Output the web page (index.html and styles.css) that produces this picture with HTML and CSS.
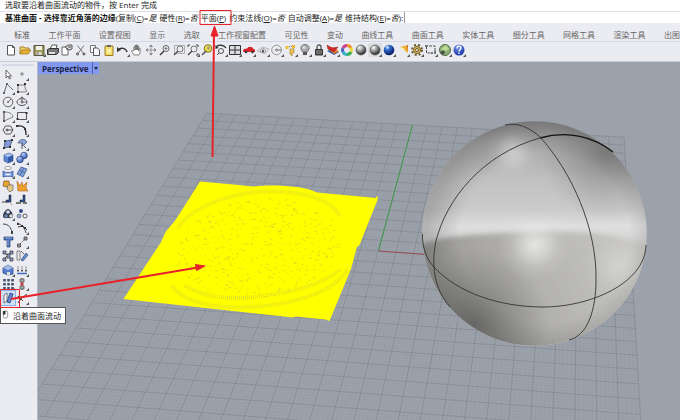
FILE: index.html
```html
<!DOCTYPE html>
<html lang="zh-CN">
<head>
	<meta charset="utf-8">
	<meta name="viewport" content="width=device-width, initial-scale=1">
	<title>Perspective</title>
	<link rel="stylesheet" href="styles.css">
</head>
<body>
	<header>
		<div class="history">选取要沿着曲面流动的物件，按 Enter 完成</div>
		<div class="command">
			<label class="prompt" for="cmd">基准曲面 - 选择靠近角落的边缘</label>
			<span class="paren">(</span>
			<button class="option">复制(<u>C</u>)=<i>是</i></button>
			<button class="option">硬性(<u>R</u>)=<i>否</i></button>
			<button class="option plane">平面(<u>P</u>)</button>
			<button class="option">约束法线(<u>O</u>)=<i>否</i></button>
			<button class="option">自动调整(<u>A</u>)=<i>是</i></button>
			<button class="option">维持结构(<u>E</u>)=<i>否</i>):</button>
			<input id="cmd" class="entry" type="text">
		</div>
	</header>

	<nav class="tabs">
		<button class="tab active">标准</button>
		<button class="tab">工作平面</button>
		<button class="tab">设置视图</button>
		<button class="tab">显示</button>
		<button class="tab">选取</button>
		<button class="tab">工作视窗配置</button>
		<button class="tab">可见性</button>
		<button class="tab">变动</button>
		<button class="tab">曲线工具</button>
		<button class="tab">曲面工具</button>
		<button class="tab">实体工具</button>
		<button class="tab">细分工具</button>
		<button class="tab">网格工具</button>
		<button class="tab">渲染工具</button>
		<button class="tab">出图</button>
	</nav>

	<div class="toolbar">
		<button class="tool" aria-label="新建"><svg viewBox="0 0 14 14"><path d="M3.500 2.500h5l2 2v7.500h-7z" fill="#fff" stroke="#555"/><path d="M8.500 2.500v2h2" fill="none" stroke="#555"/></svg></button>
		<button class="tool" aria-label="打开"><svg viewBox="0 0 14 14"><path d="M2 11V4h4l1 1h4v2" fill="#f2cf62" stroke="#a8822b"/><path d="M2 11l2-4h9l-3 4z" fill="#e9ae2f" stroke="#95701f" stroke-width=".7"/></svg></button>
		<button class="tool more" aria-label="保存"><svg viewBox="0 0 14 14"><path d="M2 2.500h10v10H2z" fill="#a09a55" stroke="#555344"/><path d="M4 3h6v4H4z" fill="#f1f1eb"/><path d="M4.500 9h5v3h-5z" fill="#ddd"/><path d="M5.500 9.500h1v2h-1z" fill="#444"/></svg></button>
		<button class="tool" aria-label="打印"><svg viewBox="0 0 14 14"><path d="M4 6l2-4h5l-1 4" fill="#fff" stroke="#555"/><path d="M1.500 6.500l2-1h9v4l-2 2h-9z" fill="#777" stroke="#333"/><path d="M3 9h6v2H3z" fill="#ddd"/></svg></button>
		<button class="tool" aria-label="文件属性"><svg viewBox="0 0 14 14"><path d="M2 4h6v8H2z" fill="#fff" stroke="#666"/><path d="M5 4l3-2h4v4L9 7z" fill="#ddd" stroke="#555"/><path d="M8 4h3M6 6h2" stroke="#444"/></svg></button>
		<button class="tool" aria-label="剪切"><svg viewBox="0 0 14 14" fill="none"><path d="M3.500 2.500l6 8M10 2.500l-6 8" stroke="#777"/><circle cx="3.500" cy="11" r="1" stroke="#444"/><circle cx="10" cy="11" r="1" stroke="#444"/></svg></button>
		<button class="tool" aria-label="复制"><svg viewBox="0 0 14 14"><path d="M2.500 2.500h5v7h-5z" fill="#fff" stroke="#777"/><path d="M5.500 5h4l2 2v5.500h-6z" fill="#f6f6fa" stroke="#555"/></svg></button>
		<button class="tool" aria-label="粘贴"><svg viewBox="0 0 14 14"><path d="M3 3h8v9.500H3z" fill="#f4dd65" stroke="#9a7d2b"/><path d="M5 2h4v2H5z" fill="#666"/><path d="M5 6h4v4H5z" fill="#fbf0a5"/></svg></button>
		<button class="tool more" aria-label="撤销"><svg viewBox="0 0 14 14"><path d="M2 7c3-3 8-2 9 2" fill="none" stroke="#333" stroke-width="1.300"/><path d="M1 4v5l4-2z" fill="#333"/></svg></button>
		<button class="tool" aria-label="平移"><svg viewBox="0 0 14 14"><path d="M4 12L1.500 8l1-1L4 8V4l1-.5V7V2.500h1.200V7V2h1.200v5V3h1.200v5l.5-3 1 .3L10 10l-1 2z" fill="#fff" stroke="#666" stroke-width=".8"/></svg></button>
		<button class="tool" aria-label="旋转视图"><svg viewBox="0 0 14 14" fill="none" stroke="#999"><path d="M7 2v10M2 7h10"/><path d="M5.500 4L7 2l1.500 2M5.500 10L7 12l1.500-2M10 5.500L12 7l-2 1.500M4 5.500L2 7l2 1.500" stroke="#777"/></svg></button>
		<button class="tool" aria-label="缩放"><svg viewBox="0 0 14 14"><circle cx="8" cy="5.500" r="3" fill="#eee" stroke="#666"/><path d="M6 8l-4 4" stroke="#444" stroke-width="1.600"/><path d="M6.500 5.500h3M8 4v3" stroke="#555" stroke-width=".7"/></svg></button>
		<button class="tool" aria-label="框选缩放"><svg viewBox="0 0 14 14" fill="none"><path d="M2.500 2.500h10v8h-10z" stroke="#777" stroke-dasharray="1 1"/><circle cx="8" cy="6" r="3" stroke="#777"/><path d="M6 8l-4 4" stroke="#444" stroke-width="1.300"/></svg></button>
		<button class="tool more" aria-label="缩放至最大范围"><svg viewBox="0 0 14 14" fill="none"><path d="M2 4V2h2M10 2h2v2M12 10v2h-2" stroke="#444"/><circle cx="8" cy="6" r="3" stroke="#777"/><path d="M6 8l-4 4" stroke="#444" stroke-width="1.300"/></svg></button>
		<button class="tool" aria-label="缩放至选取物件"><svg viewBox="0 0 14 14"><circle cx="8" cy="5.500" r="3.800" fill="#f1df3c" stroke="#7b7238"/><circle cx="8.500" cy="5" r="1.500" fill="#999"/><path d="M6 8l-4 4" stroke="#555" stroke-width="1.600"/></svg></button>
		<button class="tool more" aria-label="还原视图"><svg viewBox="0 0 14 14" fill="none"><path d="M2 4c3-3 8-2 10 1" stroke="#333" stroke-width="1.300"/><path d="M1.500 2v4l3-1z" fill="#333"/><circle cx="7" cy="8" r="2.500" stroke="#555"/><path d="M5 10l-2 2" stroke="#444"/></svg></button>
		<button class="tool more" aria-label="四个工作视窗"><svg viewBox="0 0 14 14"><path d="M1.500 2.500h11v9h-11z" fill="#dcdde1" stroke="#333"/><path d="M7 2v10M1 7h12" stroke="#333"/></svg></button>
		<button class="tool more" aria-label="汽车"><svg viewBox="0 0 14 14"><path d="M1 8l1-2 3-.5L6.500 4H10l1.500 2 1.500.5V9H1z" fill="#d8232a"/><circle cx="4" cy="9" r="1.300" fill="#333"/><circle cx="10.500" cy="9" r="1.300" fill="#333"/></svg></button>
		<button class="tool more" aria-label="工作平面"><svg viewBox="0 0 14 14"><path d="M1 8l5-4 7 2-4 5z" fill="#e5e6e9" stroke="#bbb"/><path d="M4 8c2-3 4-3 6 0-2 2-4 2-6 0z" fill="#fff" stroke="#888"/><circle cx="7" cy="8" r="1.200" fill="#555"/></svg></button>
		<button class="tool more" aria-label="物件锁点"><svg viewBox="0 0 14 14" fill="none"><circle cx="6.500" cy="7" r="4.800" stroke="#999"/><path d="M6.500 7H12" stroke="#777"/><circle cx="6.500" cy="7" r="1" fill="#eee" stroke="#777"/></svg></button>
		<button class="tool more" aria-label="选取"><svg viewBox="0 0 14 14"><path d="M3 4l8-1-3 5" fill="none" stroke="#666" stroke-dasharray="1 1"/><path d="M1.500 3h3v3h-3zM8 2h3v3H8z" fill="#f1bd35"/><path d="M6 6h4v4H8v3L6 11z" fill="#edc752" stroke="#9a7934" stroke-width=".6"/></svg></button>
		<button class="tool more" aria-label="隐藏"><svg viewBox="0 0 14 14"><path d="M4.800 9C1 5 3.500 1.500 7 1.500S13 5 9.200 9z" fill="#a9abae" stroke="#777"/><path d="M5 9h4v3H5z" fill="#555"/><circle cx="6" cy="4.500" r="1.500" fill="#ddd"/></svg></button>
		<button class="tool more" aria-label="锁定"><svg viewBox="0 0 14 14"><path d="M5 7V4a2 2 0 014 0v3" fill="none" stroke="#555" stroke-width="1.300"/><path d="M3.500 6.500h7v5.500h-7z" fill="#555" stroke="#333"/><path d="M4 8h6M4 10h6" stroke="#888"/></svg></button>
		<button class="tool more" aria-label="图层"><svg viewBox="0 0 14 14"><path d="M1 8l5-2 7 3-5 3z" fill="#315ca2"/><path d="M1 5l5-1 7 4-5 3z" fill="#f07d26"/><path d="M1 2l5 3 6-1-4 5-6-3z" fill="#d42829" stroke="#762323" stroke-width=".5"/></svg></button>
		<button class="tool" aria-label="颜色"><svg viewBox="0 0 14 14" fill="none" stroke-width="3"><path d="M7 2.500A4.500 4.500 0 0111 5" stroke="#ee962a"/><path d="M11 5a4.500 4.500 0 010 4" stroke="#e9db36"/><path d="M11 9a4.500 4.500 0 01-4 2.500" stroke="#3daf52"/><path d="M7 11.500A4.500 4.500 0 013 9" stroke="#35b4c1"/><path d="M3 9a4.500 4.500 0 010-4" stroke="#4267c2"/><path d="M3 5a4.500 4.500 0 014-2.500" stroke="#cc4193"/></svg></button>
		<button class="tool" aria-label="着色"><svg viewBox="0 0 14 14"><circle cx="7" cy="7" r="5" fill="url(#ballGrey)" stroke="#444" stroke-width=".6"/></svg></button>
		<button class="tool more pressed" aria-label="渲染"><svg viewBox="0 0 14 14"><circle cx="7" cy="7" r="5" fill="url(#ballGrey)" stroke="#444" stroke-width=".6"/></svg></button>
		<button class="tool more" aria-label="渲染属性"><svg viewBox="0 0 14 14"><circle cx="7" cy="7" r="5.300" fill="url(#ballBlue)"/></svg></button>
		<button class="tool more" aria-label="灯光"><svg viewBox="0 0 14 14"><path d="M4 4l8-2v8z" fill="#edaa35"/><path d="M4 4l4 1 1 3z" fill="#fff2a0"/><path d="M11 2h1v6z" fill="#b56425"/></svg></button>
		<button class="tool more" aria-label="选项"><svg viewBox="0 0 14 14"><circle cx="7" cy="7" r="5" fill="none" stroke="#6c5726" stroke-width="2" stroke-dasharray="2 2"/><circle cx="7" cy="7" r="3.500" fill="#dfbd54" stroke="#735f2c"/><circle cx="7" cy="7" r="1.500" fill="#eceef2" stroke="#735f2c"/></svg></button>
		<button class="tool more" aria-label="尺寸标注"><svg viewBox="0 0 14 14" fill="none" stroke="#555"><path d="M2.500 3v7h5M5 3h6v6" stroke-dasharray="3 1"/><path d="M1 2h3v2H1zM10 8h2v3h-2zM7 9h2v2H7z" fill="#777" stroke="none"/></svg></button>
		<button class="tool more" aria-label="插件"><svg viewBox="0 0 14 14"><circle cx="7" cy="7" r="5.500" fill="#8db176" stroke="#536847"/><path d="M3 6l5-4 3 4-5 3z" fill="#bdd897"/><path d="M2 9l4-2 1 3-3 2z" fill="#465044"/></svg></button>
		<button class="tool more" aria-label="说明"><svg viewBox="0 0 14 14"><circle cx="7" cy="7" r="5.500" fill="url(#ballHelp)"/><path d="M5 5.500c0-3 4-3 4-.5C9 6.500 7 6.500 7 8.500M7 9.500V11" fill="none" stroke="#fff" stroke-width="1.300"/></svg></button>
	</div>

	<main>
		<aside>
			<div class="grip"></div>
			<div class="palette">
				<button class="tool" aria-label="选取物件"><svg viewBox="0 0 14 14"><path d="M5 3v8l2-2 1.500 3 1-.5L8 9h2.500z" fill="#fff" stroke="#444" stroke-width=".8"/></svg></button>
				<button class="tool more" aria-label="点"><svg viewBox="0 0 14 14"><circle cx="7" cy="7" r="1.200" fill="#fff" stroke="#555" stroke-width=".8"/></svg></button>
				<button class="tool more" aria-label="多重直线"><svg viewBox="0 0 14 14" fill="none" stroke="#666"><path d="M3 12l3-9 6 6"/><path d="M2 11h2v2H2zM5 2h2v2H5z" fill="#666" stroke="none"/></svg></button>
				<button class="tool more" aria-label="控制点曲线"><svg viewBox="0 0 14 14" fill="none" stroke="#666"><path d="M10 4H3v7h8M10 3v4l2 4" stroke-width=".8"/><path d="M2 3h2v2H2zM9 2h2v2H9zM2 10h2v2H2z" fill="#333" stroke="none"/></svg></button>
				<button class="tool more" aria-label="圆"><svg viewBox="0 0 14 14" fill="none" stroke="#666"><circle cx="7" cy="7" r="4.800"/><path d="M7 7l3-3"/><circle cx="7" cy="7" r=".5" fill="#333"/></svg></button>
				<button class="tool more" aria-label="椭圆"><svg viewBox="0 0 14 14" fill="none" stroke="#555"><ellipse cx="7" cy="7" rx="5" ry="3.500"/><path d="M7 7V3M7 7h5" stroke-width=".7"/><circle cx="7" cy="7" r="1" fill="#fff"/><circle cx="7" cy="3" r="1" fill="#fff"/></svg></button>
				<button class="tool more" aria-label="圆弧"><svg viewBox="0 0 14 14" fill="none" stroke="#666"><path d="M3 3c5 0 8 1 9 5L3 12zM3 3v9" stroke-width=".8"/><path d="M2 2h2v2H2zM2 11h2v2H2z" fill="#555" stroke="none"/></svg></button>
				<button class="tool more" aria-label="矩形"><svg viewBox="0 0 14 14"><path d="M2.500 3.500h9v7h-9z" fill="none" stroke="#555"/><path d="M1.500 9h2v2h-2zM10.500 3h2v2h-2z" fill="#333"/></svg></button>
				<button class="tool more" aria-label="多边形"><svg viewBox="0 0 14 14" fill="none" stroke="#555"><path d="M4.500 3h5l2.500 4-2.500 4h-5L2 7z"/><path d="M5 7h7" /><circle cx="6" cy="7" r="1"/></svg></button>
				<button class="tool more" aria-label="曲线圆角"><svg viewBox="0 0 14 14" fill="none"><path d="M2 3c7-1 9 2 9 9" stroke="#222" stroke-width="1.300"/><path d="M1 2h2v2H1zM9 5h2v2H9z" fill="#333"/></svg></button>
				<button class="tool more" aria-label="曲面"><svg viewBox="0 0 14 14"><path d="M4 4l7-1-2 7-6 1z" fill="#829bd6" stroke="#35456b" stroke-width=".7"/><path d="M3 3h2v2H3zM10 2h2v2h-2zM8 9h2v2H8zM2 10h2v2H2z" fill="#333"/></svg></button>
				<button class="tool more" aria-label="旋转成形"><svg viewBox="0 0 14 14"><path d="M3 6c1-4 7-5 9-1L8 9 7 6z" fill="#89a3db" stroke="#44516f" stroke-width=".7"/><path d="M7 6v6M9 9l2 2" stroke="#555"/></svg></button>
				<button class="tool more" aria-label="立方体"><svg viewBox="0 0 14 14"><path d="M3 4l5-2 4 2-5 2z" fill="#a9c3f5"/><path d="M3 4l4 2v6l-4-2z" fill="#5c84d6"/><path d="M12 4L7 6v6l5-2z" fill="#315bab"/><path d="M3 4l5-2 4 2v6l-5 2-4-2z" fill="none" stroke="#314b86" stroke-width=".6"/></svg></button>
				<button class="tool more" aria-label="布尔运算"><svg viewBox="0 0 14 14"><circle cx="9" cy="4.500" r="3.300" fill="url(#ballBlue2)" stroke="#293e78" stroke-width=".7"/><circle cx="5" cy="8.500" r="3.300" fill="url(#ballBlue2)" stroke="#293e78" stroke-width=".7"/></svg></button>
				<button class="tool more" aria-label="投影曲线"><svg viewBox="0 0 14 14"><ellipse cx="7" cy="3" rx="3.500" ry="1.500" fill="#fff" stroke="#888" stroke-width=".8"/><path d="M2 6c3 2 7 2 10 0v6c-3-1-7-1-10 0z" fill="#719be0" stroke="#314b86" stroke-width=".7"/><ellipse cx="7" cy="9.500" rx="3" ry="1" fill="#eef"/></svg></button>
				<button class="tool more" aria-label="网格"><svg viewBox="0 0 14 14"><path d="M6 2l6 2-4 8-6-3z" fill="#7e9fdd" stroke="#3b4f7b" stroke-width=".7"/><path d="M4 5l6 3M9 3l-4 7" stroke="#445786" stroke-width=".7"/></svg></button>
				<button class="tool" aria-label="组合"><svg viewBox="0 0 14 14"><path d="M3 2h5v2l1 1v3H6L2 7z" fill="#e9a62d" stroke="#75551f" stroke-width=".7"/><path d="M7 6h5v5l-3 2-3-3z" fill="#e6c98a" stroke="#666" stroke-width=".7"/></svg></button>
				<button class="tool" aria-label="炸开"><svg viewBox="0 0 14 14"><path d="M2 2l3 5 2-4 1 4 4-4-1 6 2 3H3z" fill="#f0a02d" stroke="#ae6520" stroke-width=".6"/></svg></button>
				<button class="tool" aria-label="修剪"><svg viewBox="0 0 14 14"><path d="M8 2h2v7H5V7h3z" fill="#294f9a" stroke="#222" stroke-width=".5"/><path d="M1 9h7" stroke="#444"/><path d="M9 9l2 3" stroke="#999"/></svg></button>
				<button class="tool" aria-label="分割"><svg viewBox="0 0 14 14"><path d="M8 2h2v7H5V7h3z" fill="#294f9a" stroke="#222" stroke-width=".5"/><path d="M1 9h5v2H1zM8 9h4v2H8z" fill="#777"/></svg></button>
				<button class="tool more" aria-label="群组"><svg viewBox="0 0 14 14"><path d="M7 2c2 0 5 4 5 7s-3 2-5 2-5 1-5-2 3-7 5-7z" fill="#333a49"/><circle cx="7" cy="5" r="1.800" fill="#dae1fa"/><circle cx="5" cy="9" r="1.800" fill="#6c83bc"/><circle cx="10" cy="9" r="1.800" fill="#ddd"/></svg></button>
				<button class="tool" aria-label="解散群组"><svg viewBox="0 0 14 14"><circle cx="6" cy="4" r="2" fill="#374a8c"/><circle cx="4" cy="9" r="2" fill="#93a6dc" stroke="#444" stroke-width=".5"/><circle cx="10" cy="9" r="2" fill="#fff" stroke="#555"/></svg></button>
				<button class="tool" aria-label="编辑点"><svg viewBox="0 0 14 14"><path d="M2 3c6 0 8 4 9 8" fill="none" stroke="#444"/><path d="M10 10h2v3h-2z" fill="#444"/></svg></button>
				<button class="tool more" aria-label="显示控制点"><svg viewBox="0 0 14 14" fill="none"><path d="M2 2c4 1 8 5 9 10M3 6l5-1 4 4" stroke="#444"/><path d="M2 2h2v2H2zM6 4h2v2H6zM9 6h2v2H9z" fill="#333"/></svg></button>
				<button class="tool" aria-label="文字"><svg viewBox="0 0 14 14"><path d="M3 2h9v3H9v7H6V5H3z" fill="#4a6fb8" stroke="#2d4376" stroke-width=".7"/><path d="M4 3h7M7 5v6" stroke="#90abd9"/></svg></button>
				<button class="tool more" aria-label="移动"><svg viewBox="0 0 14 14"><path d="M3 11l7-7" stroke="#666" stroke-dasharray="2 1"/><path d="M2.500 9h3v3h-3zM9 2h3v3H9z" fill="#999" stroke="#444" stroke-width=".8"/></svg></button>
				<button class="tool" aria-label="阵列"><svg viewBox="0 0 14 14"><path d="M3 3l7 7M10 3L3 10" stroke="#555"/><path d="M2 2h3v3H2zM9 2h3v3H9zM2 9h3v3H2zM9 9h3v3H9zM6 5h3v4H6z" fill="#859cc8" stroke="#333" stroke-width=".7"/></svg></button>
				<button class="tool" aria-label="对齐"><svg viewBox="0 0 14 14"><path d="M2 2h3v9H2z" fill="#eee" stroke="#666" stroke-width=".8"/><path d="M11 4l2 2-5 6-2-1z" fill="#6a90d5" stroke="#304672" stroke-width=".7"/><path d="M6 2l3 3" stroke="#666"/></svg></button>
				<button class="tool more" aria-label="变形"><svg viewBox="0 0 14 14"><path d="M2 5l5-3 5 3v6l-5 1-5-2z" fill="#517bcc" stroke="#294078" stroke-width=".7"/><path d="M2 5l5-3 5 3-5 2z" fill="#a5bce8"/><path d="M6 9h3v3H6z" fill="#ddd"/></svg></button>
				<button class="tool more" aria-label="法线"><svg viewBox="0 0 14 14"><path d="M2 10.500h10" stroke="#426bb9" stroke-width="1.500"/><path d="M3 3v6M7 3v6M11 3v6" stroke="#999"/><path d="M2 7h2L3 9zM6 7h2L7 9zM10 7h2l-1 2z" fill="#333"/></svg></button>
				<button class="tool more" aria-label="矩形阵列"><svg viewBox="0 0 14 14"><path d="M3.500 2v10M7.500 2v10M11.500 2v10" stroke="#3d4a67" stroke-width="2.500" stroke-dasharray="2.500 1.500"/></svg></button>
				<button class="tool more" aria-label="检测"><svg viewBox="0 0 14 14"><path d="M7 1v12" stroke="#444"/><path d="M5 2h4v3H5zM5 9h4v3H5z" fill="#aaa" stroke="#555" stroke-width=".8"/><circle cx="7" cy="7" r="1.700" fill="#c94146"/></svg></button>
				<button class="tool selected" aria-label="沿着曲面流动" aria-describedby="tip"><svg viewBox="0 0 14 14"><path d="M3 4l3-2v8l-3 2z" fill="#fff" stroke="#555" stroke-width=".8"/><path d="M9 2l3 1-3 9-3-1z" fill="#5f83d2" stroke="#2f4475" stroke-width=".8"/></svg></button>
				<button class="tool more" aria-label="曲线流动"><svg viewBox="0 0 14 14"><path d="M3 12c2-4 5-6 9-9M3 5l5 5" fill="none" stroke="#444"/><circle cx="4" cy="6" r="1.300" fill="#444"/></svg></button>
			</div>
		</aside>

		<section class="viewport">
			<button class="view-title">Perspective<span class="drop"></span></button>
			<svg class="scene" viewBox="38 62 642 358" preserveAspectRatio="xMinYMin slice" role="img" aria-label="Perspective">
				<defs>
					<radialGradient id="ballGrey" cx=".35" cy=".25" r=".7"><stop offset="0" stop-color="#fff"/><stop offset=".5" stop-color="#999"/><stop offset="1" stop-color="#333"/></radialGradient>
					<radialGradient id="ballBlue" cx=".35" cy=".25" r=".7"><stop offset="0" stop-color="#e3efff"/><stop offset=".35" stop-color="#2f6bd0"/><stop offset="1" stop-color="#0a2068"/></radialGradient>
					<radialGradient id="ballBlue2" cx=".35" cy=".25" r=".8"><stop offset="0" stop-color="#b9cffa"/><stop offset="1" stop-color="#2d52a8"/></radialGradient>
					<radialGradient id="ballHelp" cx=".4" cy=".2" r=".8"><stop offset="0" stop-color="#7c9cf0"/><stop offset="1" stop-color="#1832a5"/></radialGradient>
					<linearGradient id="upper" x1="0" y1="121" x2="0" y2="240" gradientUnits="userSpaceOnUse">
						<stop offset="0" stop-color="#8a8a8a"/><stop offset=".18" stop-color="#a6a6a6"/><stop offset=".5" stop-color="#c1c1c2"/><stop offset=".75" stop-color="#cbcbcc"/><stop offset=".88" stop-color="#dedede"/><stop offset="1" stop-color="#d6d6d6"/>
					</linearGradient>
					<linearGradient id="lower" x1="450" y1="310" x2="630" y2="240" gradientUnits="userSpaceOnUse">
						<stop offset="0" stop-color="#9a9996"/><stop offset=".45" stop-color="#b2b1ae"/><stop offset="1" stop-color="#c8c7c3"/>
					</linearGradient>
					<radialGradient id="rim" cx="545" cy="238" r="118" gradientUnits="userSpaceOnUse">
						<stop offset=".72" stop-color="#444" stop-opacity="0"/><stop offset="1" stop-color="#444" stop-opacity=".38"/>
					</radialGradient>
					<radialGradient id="shadeLow" cx="475" cy="325" r="75" gradientUnits="userSpaceOnUse">
						<stop offset="0" stop-color="#444" stop-opacity=".5"/><stop offset="1" stop-color="#555" stop-opacity="0"/>
					</radialGradient>
					<radialGradient id="shadeTop" cx="606" cy="155" r="65" gradientUnits="userSpaceOnUse">
						<stop offset="0" stop-color="#444" stop-opacity=".4"/><stop offset="1" stop-color="#555" stop-opacity="0"/>
					</radialGradient>
					<radialGradient id="shine"><stop offset="0" stop-color="#f0f0ee" stop-opacity=".8"/><stop offset=".3" stop-color="#eee" stop-opacity=".55"/><stop offset=".65" stop-color="#eee" stop-opacity=".15"/><stop offset="1" stop-color="#eee" stop-opacity="0"/></radialGradient>
					<filter id="soften" x="-10%" y="-10%" width="120%" height="120%"><feGaussianBlur stdDeviation="2.500"/></filter>
					<clipPath id="ball"><circle cx="534.500" cy="233.500" r="112.300"/></clipPath>
				</defs>

				<path id="minor" class="grid-minor"/>
				<path id="major" class="grid-major"/>
				<path class="axis-y" d="M412.500 125L378.500 251"/>
				<path class="axis-x" d="M378.500 251L426 254.500"/>

				<path class="relief" d="M200 181.500l33 3 20 2c20-2 50-1 64 6l59 5.500.5-2h1v4l-18 45-2.500 2-6 22-21.500 52-4-1.500-30-3-3 1-169-18.500 37-56 5-11 10-12z"/>
				<g class="rings">
					<path d="M178 228c10-17 42-33 82-36 43-3 74 9 80 25"/>
					<path d="M172 286c15 20 55 24 92 20 42-5 72-17 84-37"/>
					<path d="M185 286c25 14 55 14 84 9 30-4 56-13 72-26"/>
				</g>
				<path id="flecks" class="flecks"/>

				<g clip-path="url(#ball)">
					<path d="M420 118h230v230H420z" fill="url(#upper)"/>
					<path d="M410 250c25-15 65-16 125-18 50-1 95 2 125 19v110H410z" fill="url(#lower)" filter="url(#soften)"/>
					<circle cx="475" cy="325" r="75" fill="url(#shadeLow)"/>
					<circle cx="606" cy="155" r="65" fill="url(#shadeTop)"/>
					<path d="M420 118h230v230H420z" fill="url(#rim)" opacity=".7"/>
					<circle cx="513" cy="153" r="28" fill="url(#shine)" opacity=".6"/>
					<circle cx="535" cy="245" r="36" fill="url(#shine)"/>
					<circle cx="618" cy="266" r="36" fill="url(#shine)" opacity=".4"/>
				</g>
				<g class="iso">
					<path d="M422.500 234C422 248 427 259 433 266C457 293 500 307 543 307C589 307 645 284 646 245"/>
					<path d="M450 307C434 289 431 264 436 241C446 200 482 154 540 138"/>
					<path class="near" d="M540 138C568 130 594 137 613 152"/>
					<path d="M505 125C518 122 530 128 540 137C572 172 597 229 596 280C596 311 587 336 569 340"/>
				</g>
			</svg>
		</section>
	</main>

	<div id="tip" class="tooltip" role="tooltip">
		<svg class="mouse" viewBox="0 0 8 10"><rect x="1.500" y="1" width="5" height="8" rx="2" fill="#fff" stroke="#888"/><path d="M1 1h3v4H1z" fill="#333"/></svg>
		沿着曲面流动
	</div>

	<svg class="marks" width="240" height="320" aria-hidden="true">
		<path d="M200 10.500h31v14h-31z"/>
		<path d="M.5 289.500h19v18H.5z"/>
		<path class="shaft" d="M212.500 157L214 34M11 299L198 267.500"/>
		<path class="head" d="M214.500 26l3.500 10h-7zM205 266l-8.500 4.500-1-6z"/>
	</svg>

	<script src="viewport.js"></script>
</body>
</html>
```

FILE: styles.css
```css
*{
	margin: 0;
	box-sizing: border-box;
}
body{
	display: flex;
	flex-direction: column;
	position: relative;
	height: 100vh;
	overflow: hidden;
	background-color: #ebecf1;
	color: #222;
	font-family: "Open Sans", "Noto Sans CJK SC", sans-serif;
	font-size: 8px;
	line-height: 11px;
}
button{
	padding: 0;
	border: none;
	background: none;
	color: inherit;
	font: inherit;
	white-space: nowrap;
}
header{
	background-color: #fff;
}
.history{
	height: 12px;
	padding-left: 5px;
	border-bottom: 1px solid #dcdde6;
	line-height: 10px;
}
.command{
	display: flex;
	height: 11px;
	padding-left: 5px;
	white-space: nowrap;
}
.prompt{
	font-weight: bold;
	color: #111;
}
.option{
	margin-right: 3px;
}
.option:last-of-type{
	margin-right: 1px;
}
.entry{
	flex: 1;
	min-width: 0;
	padding: 0;
	border: none;
	border-left: 1px solid #999;
	outline: none;
	font: inherit;
}
.tabs{
	display: flex;
	justify-content: space-between;
	align-items: center;
	height: 19px;
	padding: 4px 0 0 14px;
	border-bottom: 1px solid #d3d8e4;
	color: #666;
}
.tab.active{
	color: #555;
}
.toolbar{
	display: flex;
	height: 20px;
	padding: 1px 4px;
	border-bottom: 1px solid #c8ccd3;
}
.tool{
	position: relative;
	width: 14px;
	height: 14px;
}
.tool svg{
	display: block;
	width: 14px;
	height: 14px;
}
.more::after{
	content: "";
	position: absolute;
	right: 0;
	bottom: 0;
	border-left: 3px solid transparent;
	border-bottom: 3px solid #555;
}
.pressed{
	background-color: #dcdee2;
}
.selected{
	background-color: #cfe0f6;
	outline: 1px solid #8eb2de;
}
main{
	display: flex;
	flex: 1;
	min-height: 0;
}
aside{
	width: 37px;
	padding-top: 2px;
}
.grip{
	height: 2px;
	margin: 0 3px 1px 2px;
	background-color: #d6dae5;
}
.palette{
	display: grid;
	grid-template-columns: 14px 14px;
	padding-left: 1px;
}
.viewport{
	position: relative;
	flex: 1;
	min-width: 0;
	border-left: 1px solid #b5b9c1;
	background-color: #9ca2ab;
}
.scene{
	display: block;
	width: 100%;
	height: 100%;
}
.view-title{
	display: flex;
	align-items: center;
	position: absolute;
	top: 0;
	left: 0;
	height: 12px;
	padding-left: 4px;
	background-color: #8399ef;
	color: #1b2342;
	font-weight: bold;
}
.drop{
	display: flex;
	align-items: center;
	height: 12px;
	margin-left: 4px;
	padding: 0 1px;
	border-left: 1px solid #4c5fae;
}
.drop::after{
	content: "";
	border: 2px solid transparent;
	border-top: 3px solid #1b2342;
	border-bottom: none;
}
.grid-minor{
	fill: none;
	stroke: #858c95;
	stroke-width: .4;
	opacity: .35;
}
.grid-major{
	fill: none;
	stroke: #7d8089;
	stroke-width: .7;
	opacity: .7;
}
.axis-y{
	stroke: #3c9a45;
}
.axis-x{
	stroke: #9c4a50;
}
.relief{
	fill: #ff0;
}
.rings{
	fill: none;
	stroke: #d6d332;
	stroke-width: 4;
	stroke-dasharray: 1 1;
	opacity: .6;
}
.flecks{
	fill: none;
	stroke: #cfcc2e;
	stroke-width: 1;
	opacity: .6;
}
.iso{
	fill: none;
	stroke: #333;
	stroke-width: .9;
}
.near{
	stroke: #111;
	stroke-width: 1.4;
}
.tooltip{
	display: flex;
	align-items: center;
	gap: 4px;
	position: absolute;
	top: 307px;
	left: 0;
	height: 17px;
	padding: 0 4px 0 1px;
	border: 1px solid #555;
	background-color: #fff;
}
.mouse{
	width: 7px;
	height: 9px;
	margin-bottom: 2px;
}
.marks{
	position: absolute;
	top: 0;
	left: 0;
	fill: none;
	stroke: #e8222b;
	pointer-events: none;
}
.shaft{
	stroke-width: 2;
}
.head{
	fill: #e8222b;
}
```

FILE: viewport.js
```js
// construction plane: origin and the two vanishing points on screen
var origin = [378, 251];
var vanishX = [-13870, -700];
var vanishY = [586, -511];
var stepX = -0.00125;
var stepY = 0.01415;
var extent = 14;

function project(u, v){
	var a = u * stepX;
	var b = v * stepY;
	var w = 1 + a + b;
	var x = (origin[0] + a * vanishX[0] + b * vanishY[0]) / w;
	var y = (origin[1] + a * vanishX[1] + b * vanishY[1]) / w;
	return x.toFixed(2) + " " + y.toFixed(2);
}

function gridPath(step){
	var d = "";
	for(var i = -extent; i <= extent + 0.001; i += step){
		d += "M" + project(i, -extent) + "L" + project(i, extent);
		d += "M" + project(-extent, i) + "L" + project(extent, i);
	}
	return d;
}

document.getElementById("minor").setAttribute("d", gridPath(0.2));
document.getElementById("major").setAttribute("d", gridPath(1));

// relief texture, same seed every time
var seed = 7;
function random(){
	seed = (seed * 16807) % 2147483647;
	return seed / 2147483647;
}

var flecks = "";
for(var n = 0; n < 650; n++){
	var angle = random() * Math.PI * 2;
	var r = Math.sqrt(random());
	var x = 258 + Math.cos(angle) * r * 82;
	var y = 248 + Math.sin(angle) * r * 50 - Math.cos(angle) * r * 6;
	flecks += "M" + x.toFixed(1) + " " + y.toFixed(1) + "l" + (random() * 4 - 1).toFixed(1) + " " + (random() * 2 - 1).toFixed(1);
}
document.getElementById("flecks").setAttribute("d", flecks);
```
